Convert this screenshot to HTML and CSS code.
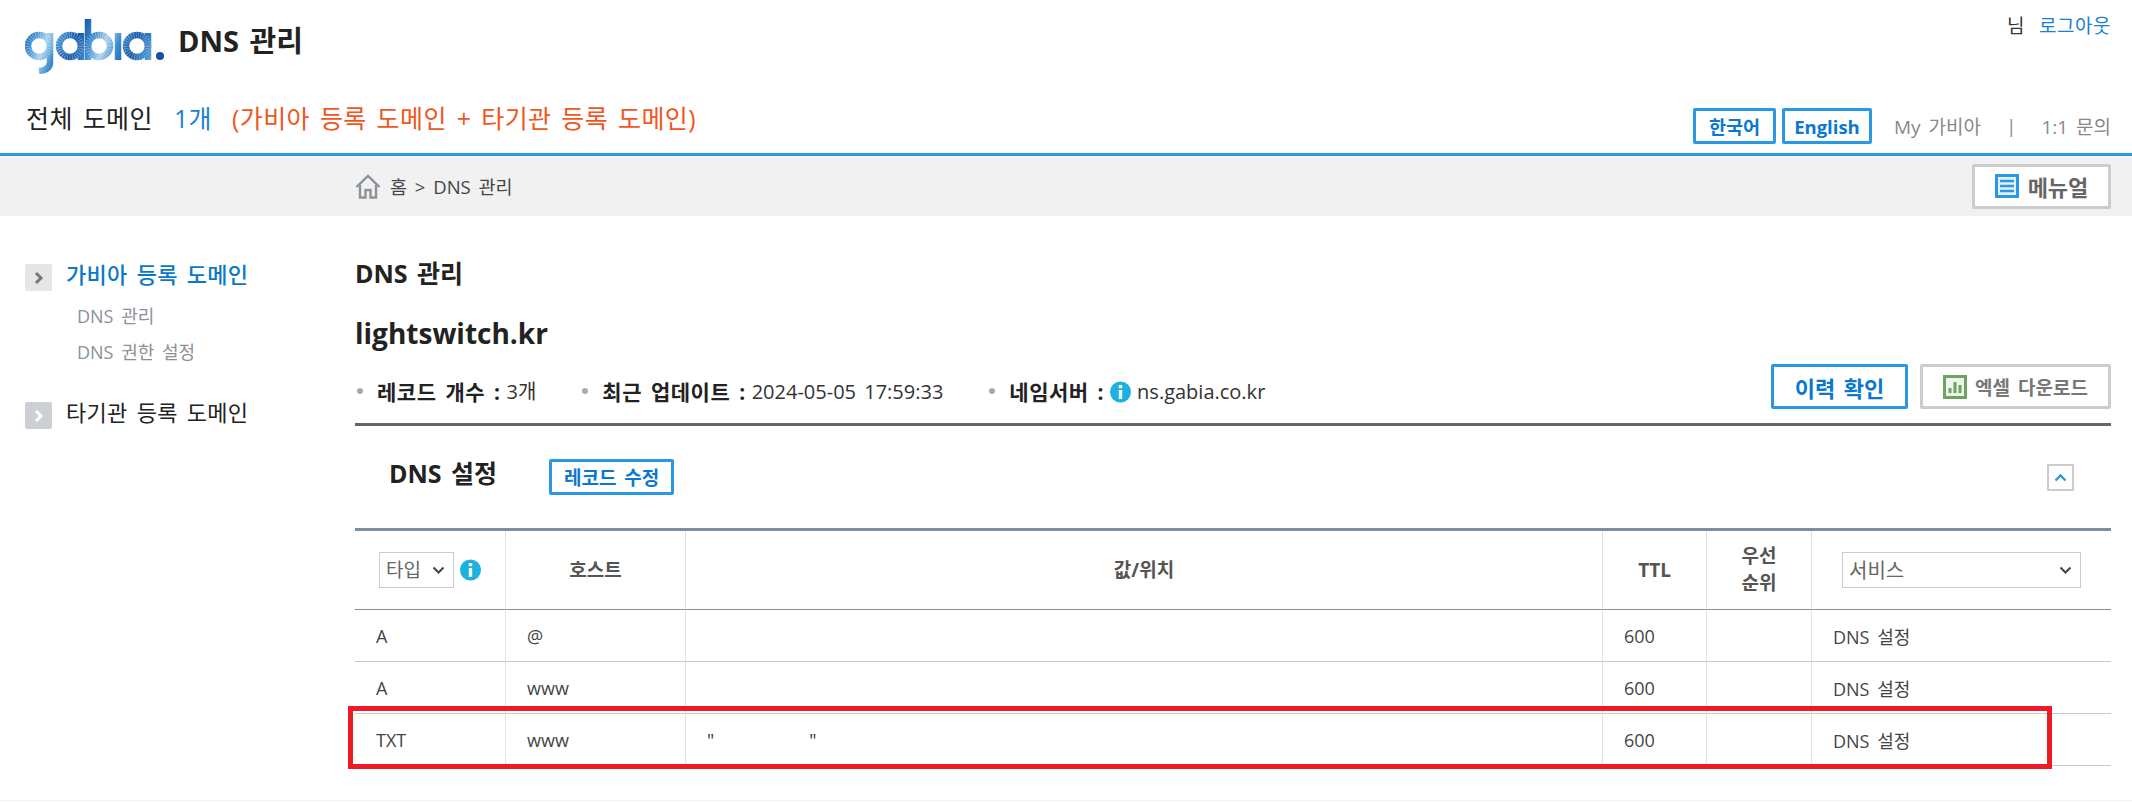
FILE: index.html
```html
<!DOCTYPE html>
<html lang="ko">
<head>
<meta charset="utf-8">
<title>DNS 관리</title>
<link rel="stylesheet" href="styles.css">
</head>
<body>
<header class="header">
  <div class="header-top">
    <div class="brand">
      <svg class="logo" width="142" height="56" viewBox="0 0 142 56" role="img" aria-label="gabia">
        <defs>
          <linearGradient id="lg" gradientUnits="userSpaceOnUse" x1="0" y1="0" x2="26" y2="10" spreadMethod="reflect">
            <stop offset="0" stop-color="#1557a8"/>
            <stop offset=".55" stop-color="#3f8ccf"/>
            <stop offset="1" stop-color="#a8d2ef"/>
          </linearGradient>
          <filter id="soft"><feGaussianBlur stdDeviation=".45"/></filter>
        </defs>
        <g fill="none" stroke="url(#lg)" stroke-width="6.5" filter="url(#soft)">
          <circle cx="14" cy="28" r="11"/>
          <path d="M25 15V44Q25 52 14 53"/>
          <circle cx="45" cy="28" r="11"/>
          <path d="M56 15V42"/>
          <circle cx="74" cy="28" r="11"/>
          <path d="M63 1V42"/>
          <path d="M93 15V42"/>
          <circle cx="112" cy="28" r="11"/>
          <path d="M123 15V42"/>
        </g>
        <g fill="none" stroke="#fff" stroke-width="6.5" stroke-dasharray=".7 1.7" opacity=".4">
          <circle cx="14" cy="28" r="11"/>
          <circle cx="45" cy="28" r="11"/>
          <circle cx="74" cy="28" r="11"/>
          <circle cx="112" cy="28" r="11"/>
        </g>
        <circle cx="135" cy="38" r="4" fill="#12509f" filter="url(#soft)"/>
      </svg>
      <h1 class="title">DNS 관리</h1>
    </div>
    <div class="user"><span class="user-name">님</span><a class="logout">로그아웃</a></div>
  </div>
  <div class="header-bottom">
    <p class="summary"><span>전체 도메인</span><span class="count">1개</span><span class="note">(가비아 등록 도메인 + 타기관 등록 도메인)</span></p>
    <nav class="top-nav">
      <a class="btn-lang">한국어</a>
      <a class="btn-lang">English</a>
      <a class="nav-link nav-my">My 가비아</a>
      <span class="nav-link nav-sep">|</span>
      <a class="nav-link">1:1 문의</a>
    </nav>
  </div>
</header>

<div class="band">
  <div class="crumbs">
    <svg width="26" height="25" viewBox="0 0 26 25" fill="none" stroke="#8b9299" stroke-width="2.4">
      <path d="M1.5 13 13 2l11.5 11"/>
      <path d="M5 11v12.5h5.5V16h5v7.5H21V11"/>
    </svg>
    <span>홈 &gt; DNS 관리</span>
  </div>
  <a class="btn-manual">
    <svg width="24" height="24" viewBox="0 0 24 24">
      <rect width="24" height="24" fill="#2b98e6"/>
      <rect x="3" y="3" width="18" height="18" fill="#e4f1fb"/>
      <path d="M5 7h14M5 12h14M5 17h14" stroke="#2b98e6" stroke-width="2.6"/>
    </svg>
    메뉴얼
  </a>
</div>

<main class="main">
  <aside class="side">
    <div class="side-item">
      <span class="side-box"><svg width="10" height="14" viewBox="0 0 10 14" fill="none" stroke="#777" stroke-width="3"><path d="M2 2l5 5-5 5"/></svg></span>
      <a class="side-link side-active">가비아 등록 도메인</a>
    </div>
    <ul class="side-sub">
      <li>DNS 관리</li>
      <li>DNS 권한 설정</li>
    </ul>
    <div class="side-item">
      <span class="side-box side-box-off"><svg width="10" height="14" viewBox="0 0 10 14" fill="none" stroke="#fff" stroke-width="3"><path d="M2 2l5 5-5 5"/></svg></span>
      <a class="side-link">타기관 등록 도메인</a>
    </div>
  </aside>

  <section class="content">
    <h2 class="page-title">DNS 관리</h2>
    <div class="domain">lightswitch.kr</div>
    <div class="info-row">
      <ul class="info">
        <li class="info-item"><b>레코드 개수 :</b> 3개</li>
        <li class="info-item"><b>최근 업데이트 :</b> 2024-05-05 17:59:33</li>
        <li class="info-item"><b>네임서버 :</b>
          <svg class="i-icon" width="21" height="22" viewBox="0 0 21 22"><circle cx="10.5" cy="11" r="10.5" fill="#1bb1e0"/><rect x="8.8" y="9" width="3.4" height="9" fill="#fff"/><rect x="8.8" y="4" width="3.4" height="3.2" fill="#fff"/></svg>
          ns.gabia.co.kr</li>
      </ul>
      <div class="info-actions">
        <a class="btn-history">이력 확인</a>
        <a class="btn-excel">
          <svg width="24" height="24" viewBox="0 0 24 24">
            <rect width="24" height="24" fill="#6fa35f"/>
            <rect x="3" y="3" width="18" height="18" fill="#eef5ea"/>
            <path d="M7 18v-5M12 18V7M17 18v-8" stroke="#6fa35f" stroke-width="3"/>
          </svg>
          엑셀 다운로드
        </a>
      </div>
    </div>

    <div class="sec-head">
      <h3 class="sec-title">DNS 설정</h3>
      <a class="btn-edit">레코드 수정</a>
      <a class="btn-collapse"><svg width="13" height="9" viewBox="0 0 13 9" fill="none" stroke="#2b98e6" stroke-width="2.4"><path d="M1.5 7.5 6.5 2.5l5 5"/></svg></a>
    </div>

    <div class="table-wrap">
      <table class="records">
        <colgroup>
          <col class="c1"><col class="c2"><col class="c3"><col class="c4"><col class="c5"><col class="c6">
        </colgroup>
        <thead>
          <tr>
            <th><div class="type-head"><select class="sel sel-type"><option>타입</option></select>
              <svg width="21" height="22" viewBox="0 0 21 22"><circle cx="10.5" cy="11" r="10.5" fill="#1bb1e0"/><rect x="8.8" y="9" width="3.4" height="9" fill="#fff"/><rect x="8.8" y="4" width="3.4" height="3.2" fill="#fff"/></svg></div></th>
            <th>호스트</th>
            <th>값/위치</th>
            <th>TTL</th>
            <th>우선<br>순위</th>
            <th><select class="sel sel-service"><option>서비스</option></select></th>
          </tr>
        </thead>
        <tbody>
          <tr><td>A</td><td>@</td><td></td><td>600</td><td></td><td>DNS 설정</td></tr>
          <tr><td>A</td><td>www</td><td></td><td>600</td><td></td><td>DNS 설정</td></tr>
          <tr><td>TXT</td><td>www</td><td><span class="txt-val">"<span class="txt-gap"></span>"</span></td><td>600</td><td></td><td>DNS 설정</td></tr>
        </tbody>
      </table>
      <div class="highlight"></div>
    </div>
  </section>
</main>
<footer class="footer"></footer>
</body>
</html>
```
FILE: styles.css
```css
* { box-sizing: border-box; }
html, body { margin: 0; padding: 0; }
body {
  height: 802px;
  overflow: hidden;
  background: #fff;
  color: #222;
  font-family: "Open Sans", "Noto Sans CJK KR", sans-serif;
  word-spacing: 3px;
}
h1, h2, h3, p, ul { margin: 0; padding: 0; }
ul { list-style: none; }

.header { height: 156px; border-bottom: 3px solid #2b98e6; }
.header-top { display: flex; justify-content: space-between; height: 95px; padding: 18px 21px 0 25px; }
.brand { display: flex; align-items: flex-start; gap: 11px; }
.logo { display: block; }
.title { font-size: 29px; line-height: 40px; font-weight: 700; color: #222; margin-top: 3px; }
.user { font-size: 19px; line-height: 26px; margin-top: -5px; letter-spacing: .5px; }
.user-name { color: #333; margin-right: 14px; }
.logout { color: #1a7fd0; }

.header-bottom { display: flex; justify-content: space-between; align-items: center; padding: 7px 21px 15px 26px; }
.summary { font-size: 25px; line-height: 32px; margin-bottom: 16px; color: #222; letter-spacing: .4px; }
.count { color: #1a7fd0; margin-left: 21px; }
.note { color: #f0561d; margin-left: 20px; }
.top-nav { display: flex; align-items: center; }
.btn-lang {
  display: flex; align-items: center; justify-content: center;
  width: 83px; height: 36px; margin-right: 6px;
  border: 3px solid #2b98e6; border-radius: 2px;
  color: #0a78d0; font-size: 18.5px; font-weight: 700;
}
.btn-lang + .btn-lang { width: 90px; }
.nav-link { color: #888; font-size: 19px; }
.nav-my { margin-left: 16px; }
.nav-sep { margin: 0 25px; }

.band { display: flex; justify-content: space-between; align-items: center; height: 60px; padding: 0 21px 0 355px; background: #f1f1f1; }
.crumbs { display: flex; align-items: center; gap: 9px; font-size: 18.5px; color: #444; }
.btn-manual {
  display: flex; align-items: center; justify-content: center; gap: 9px;
  width: 139px; height: 45px;
  background: #fff; border: 3px solid #ccc; border-radius: 2px;
  color: #666; font-size: 22px; font-weight: 700;
}

.main { display: flex; height: 584px; }
.side { width: 355px; padding: 48px 0 0 25px; }
.side-item { display: flex; align-items: flex-start; gap: 14px; }
.side-box { display: flex; align-items: center; justify-content: center; width: 27px; height: 27px; background: #e4e6e8; border-radius: 2px; }
.side-box-off { background: #ccd0d5; }
.side-link { margin-top: -3px; font-size: 22px; line-height: 27px; color: #222; letter-spacing: .3px; }
.side-active { color: #0a78c8; font-weight: 500; }
.side-sub { margin: 7px 0 32px 52px; font-size: 18px; line-height: 36px; color: #8a9199; }

.content { width: 1756px; padding-top: 42px; }
.page-title { font-size: 25px; line-height: 30px; font-weight: 700; color: #222; }
.domain { margin-top: 25px; font-size: 28px; line-height: 40px; font-weight: 700; color: #222; }
.info-row { display: flex; justify-content: space-between; align-items: flex-start; margin-top: 11px; padding-bottom: 14px; border-bottom: 3px solid #666; height: 62px; }
.info { display: flex; margin-top: 15px; font-size: 20px; line-height: 26px; color: #333; }
.info-item { position: relative; padding-left: 22px; margin-right: 44px; white-space: nowrap; display: flex; align-items: center; gap: 6px; }
.info-item::before { content: ""; position: absolute; left: 2px; top: 9px; width: 6px; height: 6px; border-radius: 50%; background: #aaa; }
.info-item b { font-size: 21px; color: #222; letter-spacing: .5px; }
.info-actions { display: flex; gap: 12px; }
.btn-history {
  display: flex; align-items: center; justify-content: center;
  width: 137px; height: 45px; border: 3px solid #2b98e6; border-radius: 2px;
  color: #0a78d0; font-size: 22px; font-weight: 700;
}
.btn-excel {
  display: flex; align-items: center; justify-content: center; gap: 8px;
  width: 191px; height: 45px; border: 3px solid #ccc; border-radius: 2px;
  color: #777; font-size: 19px; font-weight: 700;
}

.sec-head { display: flex; align-items: center; height: 102px; padding: 0 37px 0 34px; }
.sec-title { font-size: 25px; line-height: 32px; font-weight: 700; color: #222; margin-bottom: 8px; }
.btn-edit {
  display: flex; align-items: center; justify-content: center;
  width: 125px; height: 36px; margin-left: 52px;
  border: 3px solid #2b98e6; border-radius: 2px;
  color: #0a78d0; font-size: 19px; font-weight: 700;
}
.btn-collapse {
  display: flex; align-items: center; justify-content: center;
  width: 27px; height: 27px; margin-left: auto;
  border: 2px solid #ccc; border-radius: 1px;
}

.table-wrap { position: relative; }
.records { width: 1756px; table-layout: fixed; border-collapse: separate; border-spacing: 0; border-top: 3px solid #7a90a2; }
.c1 { width: 151px; } .c2 { width: 180px; } .c3 { width: 917px; }
.c4 { width: 104px; } .c5 { width: 105px; } .c6 { width: 299px; }
.records th, .records td { padding: 0; border-right: 1px solid #e2e2e2; }
.records th:last-child, .records td:last-child { border-right: 0; }
.records th {
  height: 79px; border-bottom: 1px solid #7f8e9b;
  font-size: 19px; line-height: 27px; font-weight: 700; color: #555; text-align: center;
}
.records td {
  height: 52px; border-bottom: 1px solid #c8c8c8;
  padding-left: 21px; font-size: 18px; color: #444;
}
.type-head { display: flex; align-items: center; gap: 6px; padding-left: 24px; }
.sel {
  appearance: none; -webkit-appearance: none;
  height: 36px; padding: 0 0 0 6px;
  border: 1px solid #ccc; border-radius: 0;
  background: #fff url("data:image/svg+xml,%3Csvg xmlns='http://www.w3.org/2000/svg' width='13' height='9' viewBox='0 0 13 9' fill='none' stroke='%23444' stroke-width='2'%3E%3Cpath d='M1.5 1.5l5 5 5-5'/%3E%3C/svg%3E") no-repeat right 8px center;
  color: #666; font: 400 19px "Open Sans", "Noto Sans CJK KR", sans-serif;
}
.sel-type { width: 75px; }
.sel-service { display: block; width: 239px; margin-left: 30px; font-size: 20px; letter-spacing: 0; }
.txt-val { color: #333; }
.txt-gap { display: inline-block; width: 95px; }
.highlight { position: absolute; left: -7px; top: 178px; width: 1704px; height: 63px; border: 5px solid #ed1c24; }
.footer { height: 1px; background: #f3f3f3; }
```
